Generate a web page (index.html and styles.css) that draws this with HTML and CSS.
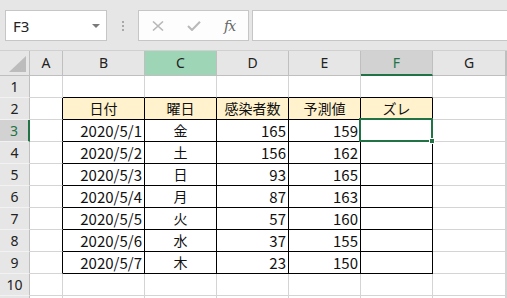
FILE: index.html
```html
<!DOCTYPE html>
<html lang="ja">
<head>
  <meta charset="UTF-8">
  <title>Book1 - Excel</title>
  <link rel="stylesheet" href="styles.css">
</head>
<body>
  <div class="toolbar">
    <div class="name-box">
      <span>F3</span>
      <span class="arrow"></span>
    </div>
    <div class="dots"><i></i><i></i><i></i></div>
    <div class="fx-box">
      <svg class="ico" width="12" height="10" viewBox="0 0 12 10"><path d="M1 0.5 L11 9.5 M11 0.5 L1 9.5" stroke="#b9b9b9" stroke-width="1.6" fill="none"/></svg>
      <svg class="ico" width="14" height="10" viewBox="0 0 14 10"><path d="M1 5 L5 9 L13 0.8" stroke="#b9b9b9" stroke-width="2" fill="none"/></svg>
      <span class="fx">fx</span>
    </div>
    <div class="formula"></div>
  </div>

  <div class="sheet">
    <div class="row head">
      <div class="corner"><span class="tri"></span></div>
      <div>A</div><div>B</div><div class="c-mark">C</div><div>D</div><div>E</div><div class="active">F</div><div>G</div><div></div>
    </div>
    <div class="row">
      <div class="rh">1</div>
      <div></div><div class="tt"></div><div class="tt"></div><div class="tt"></div><div class="tt"></div><div class="tt"></div><div></div><div></div>
    </div>
    <div class="row">
      <div class="rh">2</div>
      <div class="tl"></div>
      <div class="t th">日付</div><div class="t th">曜日</div><div class="t th">感染者数</div><div class="t th">予測値</div><div class="t th">ズレ</div>
      <div></div><div></div>
    </div>
    <div class="row">
      <div class="rh active">3</div>
      <div class="tl"></div>
      <div class="t num">2020/5/1</div><div class="t mid">金</div><div class="t num">165</div><div class="t num">159</div>
      <div class="t sel"><span class="cursor"><span class="handle"></span></span></div>
      <div></div><div></div>
    </div>
    <div class="row">
      <div class="rh">4</div>
      <div class="tl"></div>
      <div class="t num">2020/5/2</div><div class="t mid">土</div><div class="t num">156</div><div class="t num">162</div><div class="t"></div>
      <div></div><div></div>
    </div>
    <div class="row">
      <div class="rh">5</div>
      <div class="tl"></div>
      <div class="t num">2020/5/3</div><div class="t mid">日</div><div class="t num">93</div><div class="t num">165</div><div class="t"></div>
      <div></div><div></div>
    </div>
    <div class="row">
      <div class="rh">6</div>
      <div class="tl"></div>
      <div class="t num">2020/5/4</div><div class="t mid">月</div><div class="t num">87</div><div class="t num">163</div><div class="t"></div>
      <div></div><div></div>
    </div>
    <div class="row">
      <div class="rh">7</div>
      <div class="tl"></div>
      <div class="t num">2020/5/5</div><div class="t mid">火</div><div class="t num">57</div><div class="t num">160</div><div class="t"></div>
      <div></div><div></div>
    </div>
    <div class="row">
      <div class="rh">8</div>
      <div class="tl"></div>
      <div class="t num">2020/5/6</div><div class="t mid">水</div><div class="t num">37</div><div class="t num">155</div><div class="t"></div>
      <div></div><div></div>
    </div>
    <div class="row">
      <div class="rh">9</div>
      <div class="tl"></div>
      <div class="t num">2020/5/7</div><div class="t mid">木</div><div class="t num">23</div><div class="t num">150</div><div class="t"></div>
      <div></div><div></div>
    </div>
    <div class="row">
      <div class="rh">10</div>
      <div></div><div></div><div></div><div></div><div></div><div></div><div></div><div></div>
    </div>
    <div class="row">
      <div class="rh"></div>
      <div></div><div></div><div></div><div></div><div></div><div></div><div></div><div></div>
    </div>
  </div>
</body>
</html>
```

FILE: styles.css
```css
* {
  margin: 0;
  padding: 0;
  box-sizing: border-box;
}

body {
  width: 507px;
  height: 298px;
  overflow: hidden;
  background: #fff;
  font-family: "Noto Sans CJK JP", "Noto Sans", sans-serif;
  color: #111;
}

/* formula bar */
.toolbar {
  height: 51px;
  background: #e6e6e6;
  border-bottom: 1px solid #d0d0d0;
  display: flex;
  align-items: center;
  padding-left: 5px;
  padding-top: 1px;
}

.name-box {
  width: 102px;
  height: 31px;
  background: #fff;
  border: 1px solid #c6c6c6;
  display: flex;
  align-items: center;
  justify-content: space-between;
  padding: 0 6px 0 7px;
  font-family: "Noto Sans", sans-serif;
  font-size: 15px;
  color: #222;
}

.arrow {
  width: 0;
  height: 0;
  border-left: 4px solid transparent;
  border-right: 4px solid transparent;
  border-top: 4px solid #7a7a7a;
}

.dots {
  width: 31px;
  display: flex;
  flex-direction: column;
  align-items: center;
  gap: 2px;
}

.dots i {
  width: 2px;
  height: 2px;
  background: #a8a8a8;
}

.fx-box {
  width: 111px;
  height: 31px;
  background: #fdfdfd;
  border: 1px solid #c6c6c6;
  display: flex;
  align-items: center;
  padding-left: 13px;
}

.ico {
  margin-right: 23px;
}

.fx {
  font-family: "DejaVu Serif", serif;
  font-style: italic;
  font-size: 14px;
  color: #666;
  letter-spacing: -1px;
}

.formula {
  flex: 1;
  height: 31px;
  margin-left: 3px;
  background: #fff;
  border: 1px solid #c6c6c6;
  border-right: none;
}

/* grid */
.row {
  display: grid;
  grid-template-columns: 30px 33px 82px 72px 72px 72px 72px 73px 1fr;
  height: 22px;
}

.row > div {
  border-right: 1px solid #d4d4d4;
  border-bottom: 1px solid #d4d4d4;
  font-size: 14px;
  line-height: 21px;
  white-space: nowrap;
  overflow: hidden;
}

.row.head {
  height: 25px;
}

.row.head > div {
  background: #e6e6e6;
  border-right: 1px solid #bfbfbf;
  border-bottom: 1px solid #bfbfbf;
  font-family: "Noto Sans", sans-serif;
  text-align: center;
  line-height: 24px;
  color: #222;
}

.row.head > div.c-mark {
  background: #9fd5b7;
}

.row.head > div.active {
  background: #d2d2d2;
  color: #217346;
  border-bottom: 2px solid #217346;
}

.row.head > .corner {
  position: relative;
}

.tri {
  position: absolute;
  right: 3px;
  bottom: 3px;
  width: 0;
  height: 0;
  border-left: 17px solid transparent;
  border-bottom: 16px solid #bcbcbc;
}

.row > .rh {
  background: #e6e6e6;
  border-right: 1px solid #bfbfbf;
  border-bottom: 1px solid #f2f2f2;
  text-align: center;
  font-family: "Noto Sans", sans-serif;
  color: #222;
}

.row > .rh.active {
  background: #d2d2d2;
  color: #217346;
  border-right: 2px solid #217346;
}

/* table borders */
.row > .tl {
  border-right-color: #000;
}

.row > .tt {
  border-bottom-color: #000;
}

.row > .t {
  border-right-color: #000;
  border-bottom-color: #000;
}

.row > .th {
  background: #fff2cc;
  text-align: center;
}

.row > .num {
  text-align: right;
  padding-right: 2px;
  font-size: 15px;
}

.row > .mid {
  text-align: center;
}

/* active cell */
.row > .sel {
  position: relative;
  overflow: visible;
}

.cursor {
  position: absolute;
  left: -2px;
  top: -2px;
  right: -1px;
  bottom: -1px;
  border: 2px solid #217346;
}

.handle {
  position: absolute;
  right: -4px;
  bottom: -4px;
  width: 6px;
  height: 6px;
  background: #217346;
  border: 1px solid #fff;
}
```
